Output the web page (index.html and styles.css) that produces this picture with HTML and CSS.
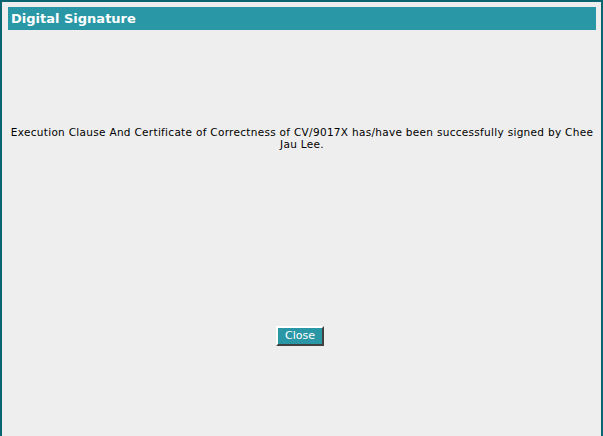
FILE: index.html
```html
<!DOCTYPE html>
<html>
<head>
<meta charset="utf-8">
<link rel="stylesheet" href="styles.css">
</head>
<body>
<div class="frame">
  <div class="titlebar">Digital Signature</div>
  <div class="message">Execution Clause And Certificate of Correctness of CV/9017X has/have been successfully signed by Chee Jau Lee.</div>
  <div class="actions"><button class="btn">Close</button></div>
</div>
</body>
</html>
```
FILE: styles.css
```css
html, body {
  margin: 0;
  padding: 0;
  height: 100%;
}
body {
  background: #eeeeee;
  font-family: "DejaVu Sans", Verdana, sans-serif;
}
.frame {
  box-sizing: border-box;
  height: 436px;
  border: 2px solid #0b6570;
  border-bottom: none;
  padding: 5px 5px 0 6px;
}
.titlebar {
  background: #2997a5;
  color: #ffffff;
  font-size: 13px;
  font-weight: bold;
  height: 23px;
  line-height: 24px;
  padding-left: 3px;
}
.message {
  margin-top: 96px;
  font-size: 10.5px;
  letter-spacing: 0.3px;
  line-height: 12px;
  text-align: center;
  color: #000000;
  padding: 0;
}
.actions {
  margin-top: 174px;
  text-align: center;
  padding-right: 4px;
}
.btn {
  font-family: "DejaVu Sans", Verdana, sans-serif;
  font-size: 11px;
  color: #ffffff;
  background: #2997a5;
  border: 2px solid;
  border-color: #ffffff #404040 #404040 #ffffff;
  width: 48px;
  height: 20px;
  padding: 0;
  margin: 0;
}
```
